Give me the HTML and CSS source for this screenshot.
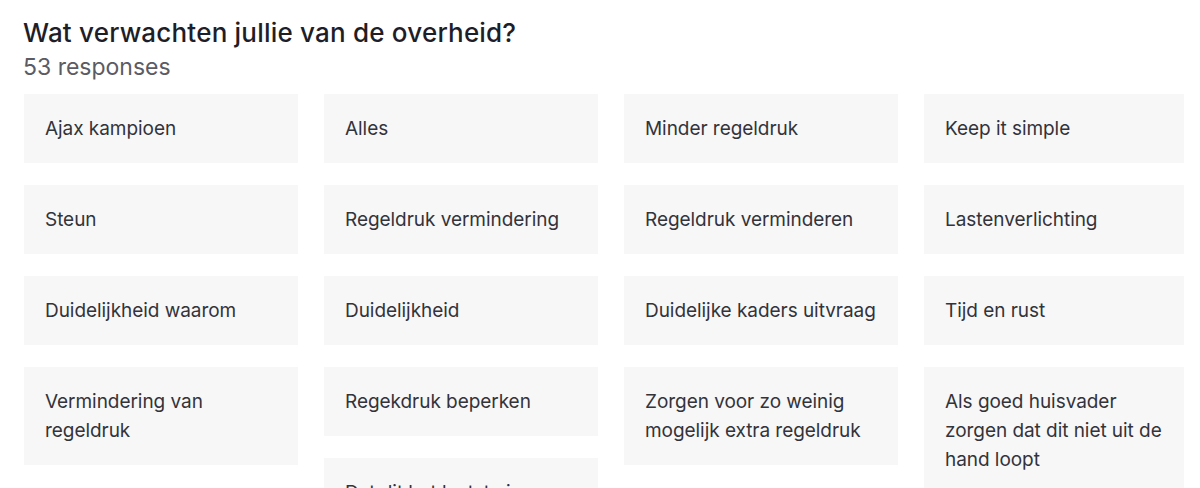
FILE: index.html
```html
<!DOCTYPE html>
<html lang="nl">
<head>
<meta charset="utf-8">
<title>Wat verwachten jullie van de overheid?</title>
<link rel="stylesheet" href="styles.css">
</head>
<body>
<main class="page">
  <header class="head">
    <h1 class="title">Wat verwachten jullie van de overheid?</h1>
    <p class="count">53 responses</p>
  </header>
  <section class="board">
    <div class="col">
      <div class="card">Ajax kampioen</div>
      <div class="card">Steun</div>
      <div class="card">Duidelijkheid waarom</div>
      <div class="card">Vermindering van regeldruk</div>
    </div>
    <div class="col">
      <div class="card">Alles</div>
      <div class="card">Regeldruk vermindering</div>
      <div class="card">Duidelijkheid</div>
      <div class="card">Regekdruk beperken</div>
      <div class="card">Dat dit het laatste is</div>
    </div>
    <div class="col">
      <div class="card">Minder regeldruk</div>
      <div class="card">Regeldruk verminderen</div>
      <div class="card">Duidelijke kaders uitvraag</div>
      <div class="card">Zorgen voor zo weinig mogelijk extra regeldruk</div>
    </div>
    <div class="col col-last">
      <div class="card">Keep it simple</div>
      <div class="card">Lastenverlichting</div>
      <div class="card">Tijd en rust</div>
      <div class="card">Als goed huisvader zorgen dat dit niet uit de hand loopt</div>
    </div>
  </section>
</main>
</body>
</html>
```
FILE: styles.css
```css
html, body {
  margin: 0;
  padding: 0;
  background: #ffffff;
  overflow: hidden;
}
body {
  font-family: Inter, "Noto Sans", "Liberation Sans", sans-serif;
  color: #2f2f36;
}
.page {
  padding: 16px 0 0 24px;
  height: 488px;
  box-sizing: border-box;
  overflow: hidden;
}
.head {
  display: flex;
  flex-direction: column;
}
.title {
  margin: 0 0 0 -1px;
  font-size: 26px;
  line-height: 34px;
  font-weight: 500;
  color: #1e1e28;
  letter-spacing: 0.2px;
}
.count {
  margin: 2px 0 0 -1px;
  font-size: 23px;
  line-height: 30px;
  font-weight: 400;
  color: #5b5b63;
}
.board {
  margin-top: 12px;
  display: flex;
  gap: 26px;
  align-items: flex-start;
}
.col {
  width: 274px;
  display: flex;
  flex-direction: column;
  gap: 22px;
}
.col-last {
  width: 260px;
}
.card {
  background: #f7f7f8;
  padding: 20px 21px;
  font-size: 19px;
  line-height: 29px;
  color: #33333a;
  letter-spacing: -0.05px;
}
```
